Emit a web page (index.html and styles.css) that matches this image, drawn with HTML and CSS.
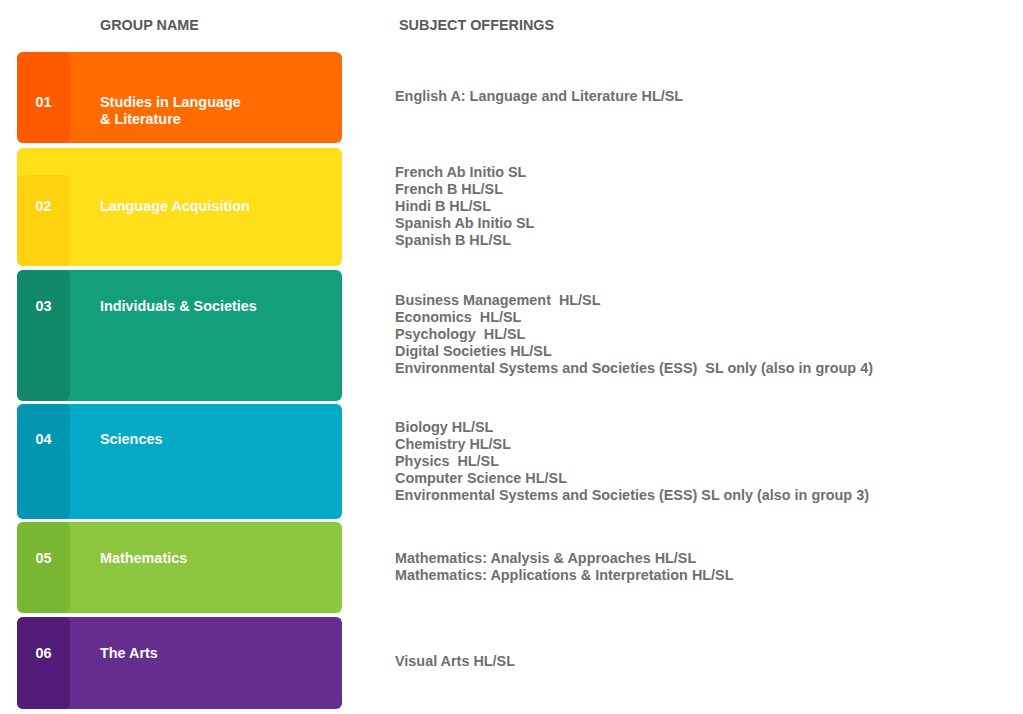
FILE: index.html
```html
<!DOCTYPE html>
<html lang="en">
<head>
<meta charset="utf-8">
<title>IB Subject Groups</title>
<link rel="stylesheet" href="styles.css">
</head>
<body>
<main class="table">
  <div class="head head-group">GROUP NAME</div>
  <div class="head head-subj">SUBJECT OFFERINGS</div>

  <div class="card c1">
    <div class="num">01</div>
    <div class="title">Studies in Language<br>&amp; Literature</div>
  </div>
  <div class="subj s1">English A: Language and Literature HL/SL</div>

  <div class="card c2">
    <div class="num">02</div>
    <div class="title">Language Acquisition</div>
  </div>
  <div class="subj s2">French Ab Initio SL<br>French B HL/SL<br>Hindi B HL/SL<br>Spanish Ab Initio SL<br>Spanish B HL/SL</div>

  <div class="card c3">
    <div class="num">03</div>
    <div class="title">Individuals &amp; Societies</div>
  </div>
  <div class="subj s3">Business Management&nbsp; HL/SL<br>Economics&nbsp; HL/SL<br>Psychology&nbsp; HL/SL<br>Digital Societies HL/SL<br>Environmental Systems and Societies (ESS)&nbsp; SL only (also in group 4)</div>

  <div class="card c4">
    <div class="num">04</div>
    <div class="title">Sciences</div>
  </div>
  <div class="subj s4">Biology HL/SL<br>Chemistry HL/SL<br>Physics&nbsp; HL/SL<br>Computer Science HL/SL<br>Environmental Systems and Societies (ESS) SL only (also in group 3)</div>

  <div class="card c5">
    <div class="num">05</div>
    <div class="title">Mathematics</div>
  </div>
  <div class="subj s5">Mathematics: Analysis &amp; Approaches HL/SL<br>Mathematics: Applications &amp; Interpretation HL/SL</div>

  <div class="card c6">
    <div class="num">06</div>
    <div class="title">The Arts</div>
  </div>
  <div class="subj s6">Visual Arts HL/SL</div>
</main>
</body>
</html>
```
FILE: styles.css
```css
html, body {
  margin: 0;
  padding: 0;
  background: #ffffff;
}

body {
  font-family: "Liberation Sans", Arial, sans-serif;
  font-weight: bold;
  font-size: 14.4px;
  line-height: 17px;
}

.table {
  display: grid;
  grid-template-columns: 325px 1fr;
  /* header, then each card row including the small gap above it */
  grid-template-rows: 52px 91px 123px 135px 118px 94px 96px;
  column-gap: 53px;
  padding-left: 17px;
}

.head {
  padding-top: 17px;
  color: #55585c;
}

.head-group {
  padding-left: 83px;
}

.head-subj {
  padding-left: 4px;
  color: #5a5a5a;
}

.card {
  display: flex;
  align-items: flex-start;
  border-radius: 6px;
  color: #fbfbf7;
  overflow: hidden;
}

.num {
  width: 53px;
  align-self: stretch;
  box-sizing: border-box;
  text-align: center;
  border-radius: 6px;
}

.title {
  padding-left: 30px;
}

.subj {
  color: #6f6f6f;
}

/* vertical spacing between the stacked cards */
.c2 { margin-top: 5px; }
.c3 { margin-top: 4px; }
.c4 { margin-top: 3px; }
.c5 { margin-top: 3px; }
.c6 { margin-top: 4px; }

/* card colours */
.c1 { background: #ff6b00; }
.c1 .num { background: #ff5a00; }
.c2 { background: #ffde1a; }
.c2 .num { background: #ffd20f; }
.c3 { background: #149f7c; }
.c3 .num { background: #10896a; }
.c4 { background: #03a9c7; }
.c4 .num { background: #0396b1; }
.c5 { background: #8dc63f; }
.c5 .num { background: #7ab833; }
.c6 { background: #642d8f; }
.c6 .num { background: #521c78; }

/* text positions inside cards */
.c1 .num, .c1 .title { padding-top: 42px; }
.c2 .num { margin-top: 27px; padding-top: 23px; }
.c2 .title { padding-top: 50px; }
.c3 .num, .c3 .title { padding-top: 28px; }
.c4 .num, .c4 .title { padding-top: 27px; }
.c5 .num, .c5 .title { padding-top: 28px; }
.c6 .num, .c6 .title { padding-top: 28px; }

/* subject text positions (row top includes the gap above the card) */
.s1 { padding-top: 36px; }
.s2 { padding-top: 21px; }
.s3 { padding-top: 26px; }
.s4 { padding-top: 18px; }
.s5 { padding-top: 31px; }
.s6 { padding-top: 40px; }
```
